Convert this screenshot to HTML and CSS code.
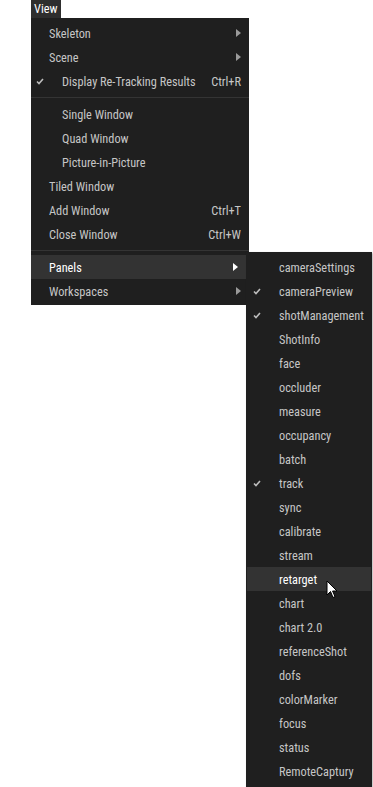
FILE: index.html
```html
<!DOCTYPE html>
<html lang="en">
<head>
    <meta charset="UTF-8">
    <meta name="viewport" content="width=device-width, initial-scale=1.0">
    <title>View Menu</title>
    <link rel="stylesheet" href="styles.css">
</head>
<body>
    <div class="menubar">
        <span class="menubar-tab">View</span>
    </div>

    <div class="menus">
        <div class="menu main-menu">
            <div class="item"><span class="label">Skeleton</span><span class="arrow"></span></div>
            <div class="item"><span class="label">Scene</span><span class="arrow"></span></div>
            <div class="item indent">
                <svg class="check" width="8" height="7" viewBox="0 0 8 7"><path d="M1 3.5 L3 5.5 L7 1" fill="none" stroke="#bdbdbd" stroke-width="1.6"/></svg>
                <span class="label">Display Re-Tracking Results</span><span class="shortcut">Ctrl+R</span>
            </div>
            <div class="separator"></div>
            <div class="item indent"><span class="label">Single Window</span></div>
            <div class="item indent"><span class="label">Quad Window</span></div>
            <div class="item indent"><span class="label">Picture-in-Picture</span></div>
            <div class="item"><span class="label">Tiled Window</span></div>
            <div class="item"><span class="label">Add Window</span><span class="shortcut">Ctrl+T</span></div>
            <div class="item"><span class="label">Close Window</span><span class="shortcut">Ctrl+W</span></div>
            <div class="separator"></div>
            <div class="item active"><span class="label">Panels</span><span class="arrow"></span></div>
            <div class="item"><span class="label">Workspaces</span><span class="arrow"></span></div>
        </div>

        <div class="menu sub-menu">
            <div class="item"><span class="label">cameraSettings</span></div>
            <div class="item">
                <svg class="check" width="8" height="7" viewBox="0 0 8 7"><path d="M1 3.5 L3 5.5 L7 1" fill="none" stroke="#bdbdbd" stroke-width="1.6"/></svg>
                <span class="label">cameraPreview</span>
            </div>
            <div class="item">
                <svg class="check" width="8" height="7" viewBox="0 0 8 7"><path d="M1 3.5 L3 5.5 L7 1" fill="none" stroke="#bdbdbd" stroke-width="1.6"/></svg>
                <span class="label">shotManagement</span>
            </div>
            <div class="item"><span class="label">ShotInfo</span></div>
            <div class="item"><span class="label">face</span></div>
            <div class="item"><span class="label">occluder</span></div>
            <div class="item"><span class="label">measure</span></div>
            <div class="item"><span class="label">occupancy</span></div>
            <div class="item"><span class="label">batch</span></div>
            <div class="item">
                <svg class="check" width="8" height="7" viewBox="0 0 8 7"><path d="M1 3.5 L3 5.5 L7 1" fill="none" stroke="#bdbdbd" stroke-width="1.6"/></svg>
                <span class="label">track</span>
            </div>
            <div class="item"><span class="label">sync</span></div>
            <div class="item"><span class="label">calibrate</span></div>
            <div class="item"><span class="label">stream</span></div>
            <div class="item active">
                <span class="label">retarget</span>
                <svg class="cursor" width="13" height="20" viewBox="0 0 13 20"><path d="M1 1 L1 15 L4.5 11.5 L7 17.5 L9 16.6 L6.6 11 L11 11 Z" fill="#fff" stroke="#000" stroke-width="1"/></svg>
            </div>
            <div class="item"><span class="label">chart</span></div>
            <div class="item"><span class="label">chart 2.0</span></div>
            <div class="item"><span class="label">referenceShot</span></div>
            <div class="item"><span class="label">dofs</span></div>
            <div class="item"><span class="label">colorMarker</span></div>
            <div class="item"><span class="label">focus</span></div>
            <div class="item"><span class="label">status</span></div>
            <div class="item"><span class="label">RemoteCaptury</span></div>
        </div>
    </div>
</body>
</html>
```

FILE: styles.css
```css
body {
    margin: 0;
    background-color: #fff;
    font-family: Roboto, "Noto Sans", sans-serif;
    font-stretch: condensed;
    font-size: 12.3px;
    color: #c6c6c6;
}

.menubar {
    height: 18px;
    padding-left: 31px;
}

.menubar-tab {
    display: inline-block;
    height: 18px;
    line-height: 19px;
    padding: 0 4px 0 3px;
    background-color: #2e2e2e;
    color: #fff;
}

.menus {
    display: flex;
    align-items: flex-start;
}

.menu {
    background-color: #1f1f1f;
    box-sizing: border-box;
}

.main-menu {
    width: 218px;
    margin-left: 31px;
    padding: 3px 0 2px;
}

.sub-menu {
    position: relative;
    width: 126px;
    margin-left: -3px;
    margin-top: 234px;
    padding: 3px 1px 4px;
    box-shadow: 1px 1px 2px rgba(0, 0, 0, 0.3);
}

.item {
    position: relative;
    display: flex;
    align-items: center;
    box-sizing: border-box;
    height: 24px;
    padding: 2px 8px 0 18px;
}

.item.indent {
    padding-left: 31px;
}

.item.active {
    background-color: #333;
    color: #fff;
}

.main-menu .item.active {
    margin-right: 3px;
}

.label {
    flex: 1;
    white-space: nowrap;
}

.shortcut {
    white-space: nowrap;
}

.arrow {
    width: 0;
    height: 0;
    margin-top: -2px;
    border-top: 4px solid transparent;
    border-bottom: 4px solid transparent;
    border-left: 5px solid #9a9a9a;
}

.item.active .arrow {
    border-left-color: #fff;
}

.check {
    position: absolute;
    left: 5px;
    top: 9px;
}

.separator {
    height: 9px;
    display: flex;
    align-items: center;
}

.separator::before {
    content: "";
    flex: 1;
    height: 1px;
    background-color: #343434;
}

.sub-menu .item {
    padding-left: 32px;
}

.sub-menu .check {
    left: 6px;
}

.cursor {
    position: absolute;
    left: 79px;
    top: 13px;
}
```
